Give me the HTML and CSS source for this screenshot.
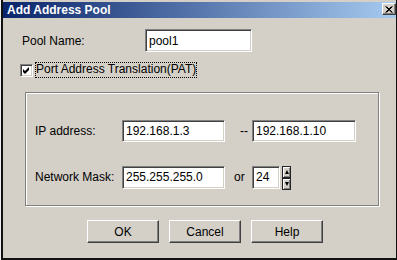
FILE: index.html
```html
<!DOCTYPE html>
<html lang="en">
<head>
    <meta charset="UTF-8">
    <title>Add Address Pool</title>
    <link rel="stylesheet" href="styles.css">
</head>
<body>
    <div class="window">
        <div class="title-bar">
            <span class="title">Add Address Pool</span>
            <button class="close-btn" type="button">
                <svg width="8" height="7" viewBox="0 0 8 7">
                    <path d="M0.5 0.5 L7 6.5 M1.5 0.5 L7.5 6.5 M6.5 0.5 L0.5 6.5 M7.5 0.5 L1.5 6.5" stroke="#000" stroke-width="1" fill="none"/>
                </svg>
            </button>
        </div>

        <div class="content">
            <div class="row-pool">
                <label class="pool-label" for="poolName">Pool Name:</label>
                <div class="field pool-field">pool1</div>
            </div>

            <div class="row-pat">
                <span class="checkbox">
                    <svg width="7" height="7" viewBox="0 0 7 7">
                        <path d="M0 2 L2 4 L6 0 L6 3 L2 7 L0 5 Z" fill="#000"/>
                    </svg>
                </span>
                <span class="pat-label">Port Address Translation(PAT)</span>
            </div>

            <div class="group-box">
                <div class="group-row ip-row">
                    <span class="group-label">IP address:</span>
                    <div class="field ip-field">192.168.1.3</div>
                    <span class="sep sep-dash">--</span>
                    <div class="field ip-field">192.168.1.10</div>
                </div>
                <div class="group-row mask-row">
                    <span class="group-label">Network Mask:</span>
                    <div class="field ip-field">255.255.255.0</div>
                    <span class="sep sep-or">or</span>
                    <div class="field bits-field">24</div>
                    <div class="spinner">
                        <span class="spin spin-up"><i></i></span>
                        <span class="spin spin-down"><i></i></span>
                    </div>
                </div>
            </div>

            <div class="buttons">
                <button class="btn" type="button">OK</button>
                <button class="btn" type="button">Cancel</button>
                <button class="btn" type="button">Help</button>
            </div>
        </div>
    </div>
</body>
</html>
```

FILE: styles.css
```css
* {
    margin: 0;
    padding: 0;
    box-sizing: border-box;
}

body {
    background-color: #f0f0f0;
    font-family: "Liberation Sans", Arial, sans-serif;
    font-size: 12px;
    color: #000;
}

.window {
    width: 396px;
    height: 260px;
    margin-left: 1px;
    padding-top: 2px;
    background-color: #d4d0c8;
    border-left: 2px solid #111;
    border-right: 1px solid #111;
    border-bottom: 2px solid #111;
}

.title-bar {
    display: flex;
    justify-content: space-between;
    align-items: flex-start;
    height: 16px;
    background: linear-gradient(to right, #0a246a, #a6caf0);
}

.title {
    padding-left: 4px;
    line-height: 16px;
    font-size: 12px;
    font-weight: bold;
    color: #fff;
}

.close-btn {
    display: flex;
    justify-content: center;
    align-items: center;
    width: 14px;
    height: 12px;
    margin-top: 1px;
    background-color: #d4d0c8;
    border: 1px solid;
    border-color: #fff #404040 #404040 #fff;
    box-shadow: inset -1px -1px 0 #808080;
}

.content {
    padding: 11px 0 0 19px;
}

.field {
    display: flex;
    align-items: center;
    padding-left: 3px;
    background-color: #fff;
    border-top: 1px solid #808080;
    border-left: 1px solid #808080;
    border-right: 1px solid #fff;
    border-bottom: 1px solid #fff;
    box-shadow: inset 1px 1px 0 #404040, inset -1px -1px 0 #d4d0c8;
}

.row-pool {
    display: flex;
    align-items: center;
}

.pool-label {
    width: 123px;
}

.pool-field {
    width: 107px;
    height: 23px;
}

.row-pat {
    display: flex;
    align-items: center;
    height: 16px;
    margin-top: 10px;
    margin-left: -2px;
}

.checkbox {
    display: flex;
    justify-content: center;
    align-items: center;
    width: 13px;
    height: 13px;
    background-color: #fff;
    border-top: 1px solid #808080;
    border-left: 1px solid #808080;
    border-right: 1px solid #fff;
    border-bottom: 1px solid #fff;
    box-shadow: inset 1px 1px 0 #404040, inset -1px -1px 0 #d4d0c8;
}

.pat-label {
    margin-left: 2px;
    padding: 0 1px;
    height: 16px;
    line-height: 14px;
    outline: 1px dotted #000;
    outline-offset: -1px;
}

.group-box {
    width: 354px;
    height: 114px;
    margin: 14px 0 0 3px;
    padding: 27px 0 0 9px;
    border: 1px solid #808080;
    box-shadow: inset 1px 1px 0 #fff, 1px 1px 0 #fff;
}

.group-row {
    display: flex;
    align-items: center;
}

.mask-row {
    margin-top: 22px;
}

.group-label {
    width: 87px;
}

.ip-field {
    width: 103px;
    height: 22px;
}

.mask-row .ip-field {
    height: 23px;
}

.ip-row .ip-field:last-child {
    width: 104px;
}

.sep {
    width: 27px;
}

.sep-dash {
    padding-left: 15px;
}

.sep-or {
    padding-left: 9px;
}

.bits-field {
    width: 28px;
    height: 23px;
}

.spinner {
    display: flex;
    flex-direction: column;
    margin-left: 2px;
    margin-top: 2px;
}

.spin {
    display: flex;
    justify-content: center;
    align-items: center;
    width: 9px;
    height: 12px;
    background-color: #d4d0c8;
    border: 1px solid #222;
    box-shadow: inset 1px 1px 0 #fff, inset -1px -1px 0 #808080;
}

.spin i {
    display: block;
    width: 0;
    height: 0;
    border-left: 2px solid transparent;
    border-right: 2px solid transparent;
}

.spin-up i {
    border-bottom: 4px solid #000;
}

.spin-down i {
    border-top: 4px solid #000;
}

.buttons {
    display: flex;
    gap: 10px;
    margin: 14px 0 0 65px;
}

.btn {
    width: 72px;
    height: 23px;
    font-family: "Liberation Sans", Arial, sans-serif;
    font-size: 12px;
    color: #000;
    background-color: #d4d0c8;
    border: 1px solid;
    border-color: #fff #404040 #404040 #fff;
    box-shadow: inset -1px -1px 0 #808080;
}
```
